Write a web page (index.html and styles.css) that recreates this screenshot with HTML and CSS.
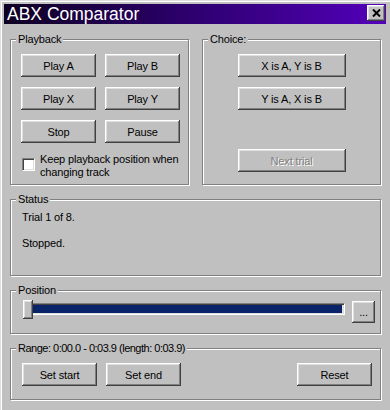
FILE: index.html
```html
<!DOCTYPE html>
<html lang="en">
<head>
  <meta charset="UTF-8" />
  <title>ABX Comparator</title>
  <link rel="stylesheet" href="styles.css">
</head>
<body>

<div class="window">
  <div class="titlebar">
    <span class="title">ABX Comparator</span>
    <button class="close">
      <svg width="9" height="8" viewBox="0 0 9 8">
        <path d="M1 0.5 L8 7.5 M8 0.5 L1 7.5" stroke="#000" stroke-width="2" fill="none" />
      </svg>
    </button>
  </div>

  <div class="content">
    <div class="top-row">
      <!-- playback -->
      <div class="group playback">
        <div class="group-title">Playback</div>
        <div class="btn-grid">
          <button class="btn">Play A</button>
          <button class="btn">Play B</button>
          <button class="btn">Play X</button>
          <button class="btn">Play Y</button>
          <button class="btn">Stop</button>
          <button class="btn">Pause</button>
        </div>
        <label class="check">
          <span class="box"></span>
          <span>Keep playback position when<br>changing track</span>
        </label>
      </div>

      <!-- choice -->
      <div class="group choice">
        <div class="group-title">Choice:</div>
        <button class="btn wide">X is A, Y is B</button>
        <button class="btn wide">Y is A, X is B</button>
        <button class="btn wide next" disabled>Next trial</button>
      </div>
    </div>

    <div class="group status">
      <div class="group-title">Status</div>
      <p class="line first">Trial 1 of 8.</p>
      <p class="line">&nbsp;</p>
      <p class="line">Stopped.</p>
    </div>

    <div class="group position">
      <div class="group-title">Position</div>
      <div class="pos-row">
        <div class="slider">
          <div class="track"><div class="fill"></div></div>
          <div class="thumb"></div>
        </div>
        <button class="btn dots">...</button>
      </div>
    </div>

    <div class="group range">
      <div class="group-title">Range: 0:00.0 - 0:03.9 (length: 0:03.9)</div>
      <div class="range-row">
        <button class="btn">Set start</button>
        <button class="btn">Set end</button>
        <button class="btn reset">Reset</button>
      </div>
    </div>
  </div>
</div>

</body>
</html>
```

FILE: styles.css
```css
body {
  margin: 0;
  background: #c0c0c0;
  font-family: "Liberation Sans", Arial, sans-serif;
  font-size: 11px;
  letter-spacing: -0.15px;
  color: #000;
}

.window {
  height: 410px;
  box-sizing: border-box;
  padding: 4px 4px 0 4px;
  background: #c0c0c0;
  box-shadow: inset 1px 1px 0 #dfdfdf, inset 2px 2px 0 #fff;
}

.titlebar {
  display: flex;
  align-items: flex-start;
  height: 20px;
  padding: 0 1px 0 3px;
  background: linear-gradient(to right, #0e0022, #2a0068 45%, #5300bb);
}
.title {
  flex: 1;
  color: #fff;
  font-size: 17.5px;
  line-height: 20px;
  letter-spacing: 0;
  white-space: nowrap;
}
.close {
  width: 18px;
  height: 16px;
  margin-top: 1px;
  padding: 0;
  border: none;
  background: #c0c0c0;
  display: flex;
  align-items: center;
  justify-content: center;
  box-shadow: inset -1px -1px #404040, inset 1px 1px #fff, inset -2px -2px #808080, inset 2px 2px #dfdfdf;
}

.content {
  padding: 15px 5px 0 6px;
}

/* etched group box */
.group {
  box-sizing: border-box;
  border: 1px solid #808080;
  box-shadow: 1px 1px 0 #fff, inset 1px 1px 0 #fff;
  margin-bottom: 14px;
}
.group-title {
  width: max-content;
  margin: -7px 0 0 5px;
  padding: 0 2px;
  line-height: 13px;
  background: #c0c0c0;
}

.top-row {
  display: grid;
  grid-template-columns: 179px 179px;
  column-gap: 13px;
}

.btn {
  height: 23px;
  width: 75px;
  padding: 0;
  border: none;
  background: #c0c0c0;
  font: inherit;
  letter-spacing: inherit;
  color: #000;
  box-shadow: inset -1px -1px #404040, inset 1px 1px #fff, inset -2px -2px #808080, inset 2px 2px #dfdfdf;
}
.btn:disabled {
  color: #808080;
  text-shadow: 1px 1px 0 #fff;
}

.playback {
  height: 146px;
  padding-left: 10px;
}
.playback .group-title {
  margin-left: -5px;
}
.btn-grid {
  display: grid;
  grid-template-columns: 75px 75px;
  column-gap: 9px;
  row-gap: 10px;
  margin-top: 8px;
}
.check {
  display: flex;
  align-items: flex-start;
  gap: 5px;
  margin-top: 10px;
  line-height: 13px;
}
.box {
  width: 13px;
  height: 13px;
  box-sizing: border-box;
  margin: 5px 0 0 1px;
  background: #fff;
  border: 1px solid;
  border-color: #808080 #fff #fff #808080;
  box-shadow: inset 1px 1px #404040, inset -1px -1px #dfdfdf;
  flex: none;
}

.choice {
  height: 146px;
  display: flex;
  flex-direction: column;
  align-items: center;
}
.choice .group-title {
  align-self: flex-start;
}
.btn.wide {
  width: 108px;
  margin-top: 10px;
}
.choice .group-title + .btn.wide {
  margin-top: 8px;
}
.btn.next {
  margin-top: 39px;
}

.status {
  height: 77px;
  padding-left: 11px;
}
.status .group-title {
  margin-left: -6px;
}
.line {
  margin: 0;
  line-height: 13px;
}
.line.first {
  margin-top: 5px;
}

.position {
  height: 44px;
  padding: 0 5px 0 12px;
}
.position .group-title {
  margin-left: -7px;
}
.pos-row {
  display: flex;
  gap: 7px;
  margin-top: 3px;
}
.slider {
  flex: 1;
  height: 19px;
  position: relative;
}
.track {
  height: 12px;
  box-sizing: border-box;
  margin: 3px 0 0 1px;
  padding: 1px 2px 1px 1px;
  border: 1px solid;
  border-color: #808080 #fff #fff #808080;
  box-shadow: inset 1px 1px #404040, inset -1px -1px #dfdfdf;
  background: #dfdfdf;
}
.fill {
  height: 100%;
  background: #0a246a;
}
.thumb {
  position: absolute;
  left: 0;
  top: 0;
  width: 10px;
  height: 19px;
  background: #c0c0c0;
  box-shadow: inset -1px -1px #404040, inset 1px 1px #fff, inset -2px -2px #808080, inset 2px 2px #dfdfdf;
}
.btn.dots {
  width: 23px;
  height: 22px;
  margin-top: 1px;
  flex: none;
}

.range {
  height: 52px;
  padding: 0 8px 0 11px;
}
.range .group-title {
  margin-left: -6px;
  letter-spacing: -0.5px;
}
.range-row {
  display: flex;
  gap: 9px;
  margin-top: 8px;
}
.reset {
  margin-left: auto;
}
```
